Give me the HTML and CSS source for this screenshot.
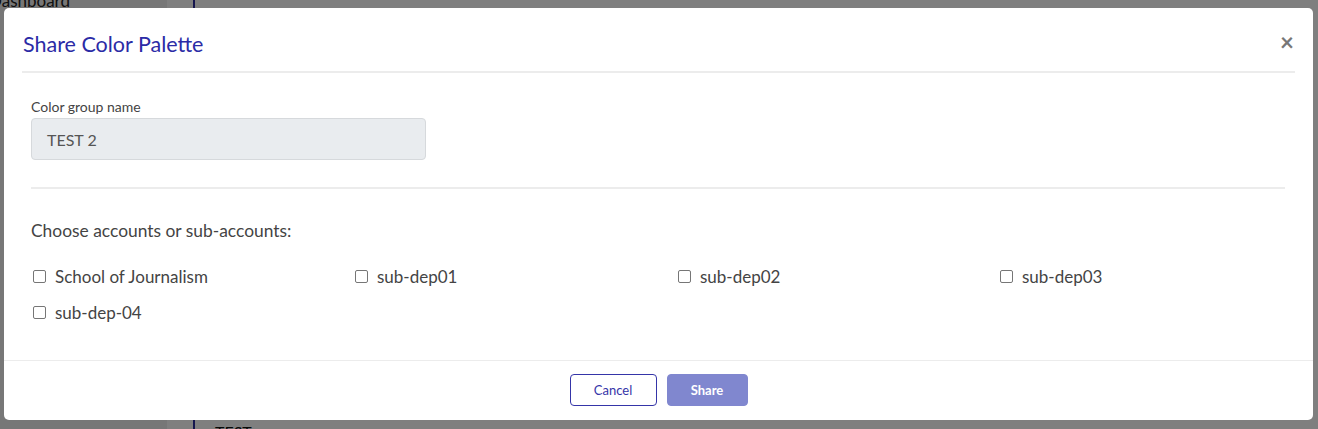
FILE: index.html
```html
<!DOCTYPE html>
<html>
<head>
<meta charset="utf-8">
<link rel="stylesheet" href="styles.css">
</head>
<body>
<div class="page">
  <aside class="sidebar">
    <div class="nav-item">Dashboard</div>
  </aside>
  <div class="gap-col"></div>
  <main class="main">
    <div class="main-row">TEST</div>
  </main>
</div>
<div class="overlay">
  <div class="modal">
    <div class="modal-header">
      <h2 class="modal-title">Share Color Palette</h2>
      <span class="close">&times;</span>
    </div>
    <div class="modal-body">
      <label class="field-label">Color group name</label>
      <div class="input">TEST 2</div>
      <hr class="divider">
      <p class="choose">Choose accounts or sub-accounts:</p>
      <div class="accounts">
        <label class="check"><span class="box"></span>School of Journalism</label>
        <label class="check"><span class="box"></span>sub-dep01</label>
        <label class="check"><span class="box"></span>sub-dep02</label>
        <label class="check"><span class="box"></span>sub-dep03</label>
        <label class="check"><span class="box"></span>sub-dep-04</label>
      </div>
    </div>
    <div class="modal-footer">
      <button class="btn btn-outline">Cancel</button>
      <button class="btn btn-primary">Share</button>
    </div>
  </div>
</div>
</body>
</html>
```
FILE: styles.css
```css
html, body {
  margin: 0;
  padding: 0;
  height: 100%;
  overflow: hidden;
}
body {
  font-family: "Lato", "Liberation Sans", sans-serif;
  background: #fff;
}
.page {
  display: flex;
  height: 429px;
}
.sidebar {
  width: 167px;
  background: #eee;
  overflow: hidden;
}
.nav-item {
  font-size: 17px;
  color: #222;
  margin-top: -10px;
  margin-left: -11px;
}
.gap-col {
  width: 26px;
  border-right: 2px solid #2a2a9c;
  background: #fff;
}
.main {
  flex: 1;
  display: flex;
  flex-direction: column;
  justify-content: flex-end;
}
.main-row {
  padding-left: 20px;
  font-size: 16px;
  color: #111;
  margin-bottom: -12px;
}
.overlay {
  position: fixed;
  inset: 0;
  background: rgba(0, 0, 0, 0.5);
  padding: 8px 5px 9px 4px;
  box-sizing: border-box;
}
.modal {
  background: #fff;
  border-radius: 5px;
  height: 412px;
  display: flex;
  flex-direction: column;
  box-sizing: border-box;
}
.modal-header {
  display: flex;
  align-items: center;
  justify-content: space-between;
  margin: 0 18px;
  height: 65px;
  border-bottom: 2px solid #ececec;
  box-sizing: border-box;
}
.modal-title {
  margin: 0;
  margin-left: 1px;
  font-size: 21.5px;
  font-weight: 400;
  color: #2b2ba6;
  padding-top: 9px;
}
.close {
  font-size: 24px;
  color: #777;
  font-weight: 700;
  line-height: 1;
  padding-top: 4px;
  margin-right: 1px;
}
.modal-body {
  padding: 26px 28px 0 27px;
  flex: 1;
}
.field-label {
  display: block;
  font-size: 14px;
  color: #444;
  line-height: 16px;
}
.input {
  margin-top: 3px;
  width: 395px;
  height: 42px;
  box-sizing: border-box;
  background: #e9ecef;
  border: 1px solid #d6d9dc;
  border-radius: 4px;
  padding: 0 15px;
  display: flex;
  align-items: center;
  font-size: 16px;
  color: #555;
}
.divider {
  border: 0;
  border-top: 2px solid #ececec;
  margin: 27px 0 0 0;
}
.choose {
  margin: 31px 0 0 0;
  font-size: 17.4px;
  color: #444;
  line-height: 22px;
}
.accounts {
  display: grid;
  grid-template-columns: 322px 323px 322px auto;
  row-gap: 14px;
  margin-top: 24px;
}
.check {
  display: flex;
  align-items: center;
  font-size: 17px;
  color: #444;
  line-height: 22px;
}
.box {
  width: 11px;
  height: 11px;
  border: 1px solid #767676;
  border-radius: 2px;
  margin: 0 9px 2px 2px;
}
.modal-footer {
  border-top: 1px solid #ececec;
  height: 60px;
  box-sizing: border-box;
  display: flex;
  justify-content: center;
  align-items: center;
  gap: 10px;
  padding-bottom: 1px;
}
.btn {
  font-family: inherit;
  font-size: 13px;
  height: 32px;
  border-radius: 4px;
  box-sizing: border-box;
  cursor: pointer;
}
.btn-outline {
  width: 87px;
  background: #fff;
  border: 1px solid #3535a8;
  color: #3535a8;
}
.btn-primary {
  width: 81px;
  background: #8087cf;
  border: 1px solid #8087cf;
  color: #fff;
  font-weight: 700;
}
```
